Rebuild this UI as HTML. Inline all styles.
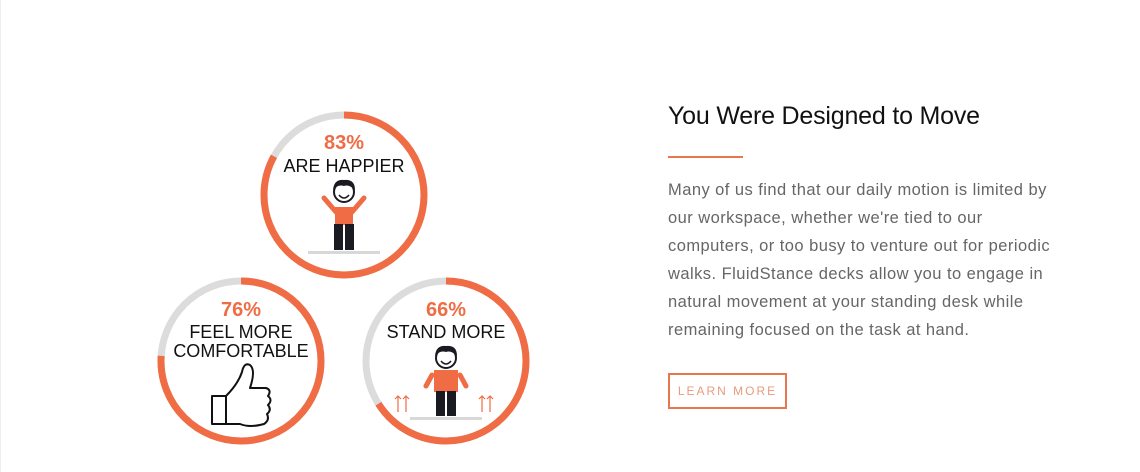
<!DOCTYPE html>
<html><head><style>
body{margin:0;width:1140px;height:472px;background:#fff;position:relative;overflow:hidden;font-family:"Liberation Sans",sans-serif}
h2{position:absolute;left:668px;top:102px;margin:0;font-size:25px;font-weight:normal;color:#111;letter-spacing:-0.2px;white-space:nowrap}
.bar{position:absolute;left:668px;top:156px;width:75px;height:2px;background:#e8774f}
p{position:absolute;left:668px;top:176px;margin:0;width:460px;font-size:16.5px;letter-spacing:0.45px;line-height:28px;color:#666;white-space:nowrap}
.btn{position:absolute;left:668px;top:373px;width:115px;height:32px;border:2px solid #e8774f;color:#e89a7e;font-size:12px;letter-spacing:2px;text-align:center;line-height:32px}
</style></head><body>
<div style="position:absolute;left:0;top:0;width:1px;height:472px;background:#eee"></div>
<svg width="600" height="472" style="position:absolute;left:0;top:0" font-family="Liberation Sans, sans-serif">
<g fill="none" stroke-width="7">
<circle cx="344" cy="195" r="80" stroke="#dcdcdc"/>
<circle cx="344" cy="195" r="80" stroke="#ef6c45" stroke-dasharray="417.2 600" transform="rotate(-90 344 195)"/>
<circle cx="241" cy="361" r="80" stroke="#dcdcdc"/>
<circle cx="241" cy="361" r="80" stroke="#ef6c45" stroke-dasharray="382 600" transform="rotate(-90 241 361)"/>
<circle cx="446" cy="361" r="80" stroke="#dcdcdc"/>
<circle cx="446" cy="361" r="80" stroke="#ef6c45" stroke-dasharray="331.7 600" transform="rotate(-90 446 361)"/>
</g>
<g text-anchor="middle">
<text x="344" y="149" fill="#ef6c45" font-size="20" font-weight="bold">83%</text>
<text x="344" y="172" fill="#111" font-size="18">ARE HAPPIER</text>
<text x="241" y="316" fill="#ef6c45" font-size="20" font-weight="bold">76%</text>
<text x="241" y="338" fill="#111" font-size="18">FEEL MORE</text>
<text x="241" y="357" fill="#111" font-size="18">COMFORTABLE</text>
<text x="446" y="316" fill="#ef6c45" font-size="20" font-weight="bold">66%</text>
<text x="446" y="338" fill="#111" font-size="18">STAND MORE</text>
</g>
<rect x="308" y="251" width="72" height="3" fill="#d8d8d8"/>
<path d="M324 198 L336 212 M364 198 L352 212" stroke="#ef6c45" stroke-width="5" stroke-linecap="round"/>
<rect x="335" y="207" width="18" height="18" fill="#ef6c45"/>
<rect x="334" y="224" width="9" height="26" fill="#1a1a22"/><rect x="345" y="224" width="9" height="26" fill="#1a1a22"/>
<circle cx="344" cy="192" r="10" fill="#fff" stroke="#1a1a22" stroke-width="2"/>
<path d="M333 190 Q334 179 344 180 Q355 179 355 190 Q349 184 344 186 Q338 184 333 190Z" fill="#1a1a22"/>
<path d="M339 195 Q344 201 349 195" stroke="#1a1a22" stroke-width="1.5" fill="none"/>
<rect x="410" y="417" width="72" height="3" fill="#d8d8d8"/>
<path d="M432 375 L426 386 M460 375 L466 386" stroke="#ef6c45" stroke-width="5" stroke-linecap="round"/>
<rect x="434" y="370" width="24" height="22" fill="#ef6c45"/>
<rect x="436" y="391" width="9" height="25" fill="#1a1a22"/><rect x="447" y="391" width="9" height="25" fill="#1a1a22"/>
<circle cx="446" cy="358" r="10" fill="#fff" stroke="#1a1a22" stroke-width="2"/>
<path d="M435 356 Q436 345 446 346 Q457 345 457 356 Q451 350 446 352 Q440 350 435 356Z" fill="#1a1a22"/>
<path d="M441 361 Q446 367 451 361" stroke="#1a1a22" stroke-width="1.5" fill="none"/>
<g stroke="#ef6c45" stroke-width="1.2" fill="none">
<path d="M398 412V396M395 399l3-3 3 3M406 412V396M403 399l3-3 3 3M482 412V396M479 399l3-3 3 3M490 412V396M487 399l3-3 3 3"/>
</g>
<path d="M212 396 L226 396 Q238 384 242 372 Q244 362 250 365 Q256 370 250 388 L266 388 Q272 390 268 396 Q273 400 268 405 Q272 410 267 414 Q270 420 264 424 Q250 428 240 424 L212 424 Z M226 396 V424" fill="#fff" stroke="#111" stroke-width="2" stroke-linejoin="round"/>
</svg>
<h2>You Were Designed to Move</h2>
<div class="bar"></div>
<p>Many of us find that our daily motion is limited by<br>our workspace, whether we're tied to our<br>computers, or too busy to venture out for periodic<br>walks. FluidStance decks allow you to engage in<br>natural movement at your standing desk while<br>remaining focused on the task at hand.</p>
<div class="btn">LEARN MORE</div>
</body></html>
